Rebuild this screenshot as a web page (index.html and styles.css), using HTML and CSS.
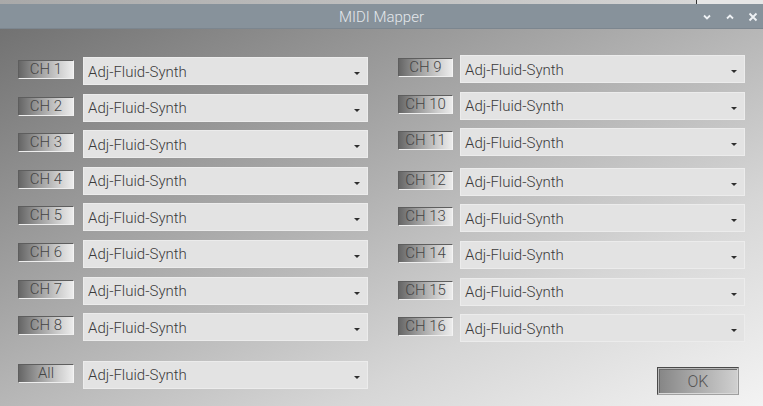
FILE: index.html
```html
<!DOCTYPE html>
<html>
<head>
<meta charset="utf-8">
<link rel="stylesheet" href="styles.css">
</head>
<body>
<div class="topstrip"><div class="strip-right"></div></div>
<div class="titlebar">
  <span class="title">MIDI Mapper</span>
  <div class="winbtns">
    <svg width="10" height="8" viewBox="0 0 10 8"><path d="M2 2.5 L5 5.5 L8 2.5" fill="none" stroke="#eef1f4" stroke-width="1.8"/></svg>
    <svg width="10" height="8" viewBox="0 0 10 8"><path d="M2 5.5 L5 2.5 L8 5.5" fill="none" stroke="#eef1f4" stroke-width="1.8"/></svg>
    <svg width="10" height="10" viewBox="0 0 10 10"><path d="M1.5 1.5 L8.5 8.5 M8.5 1.5 L1.5 8.5" fill="none" stroke="#eef1f4" stroke-width="1.9"/></svg>
  </div>
</div>
<div class="content">
  <div class="col left">
    <div class="row"><span class="lbl">CH 1</span><div class="sel"><span>Adj-Fluid-Synth</span><i class="arr"></i></div></div>
    <div class="row"><span class="lbl">CH 2</span><div class="sel"><span>Adj-Fluid-Synth</span><i class="arr"></i></div></div>
    <div class="row"><span class="lbl">CH 3</span><div class="sel"><span>Adj-Fluid-Synth</span><i class="arr"></i></div></div>
    <div class="row"><span class="lbl">CH 4</span><div class="sel"><span>Adj-Fluid-Synth</span><i class="arr"></i></div></div>
    <div class="row"><span class="lbl">CH 5</span><div class="sel"><span>Adj-Fluid-Synth</span><i class="arr"></i></div></div>
    <div class="row"><span class="lbl">CH 6</span><div class="sel"><span>Adj-Fluid-Synth</span><i class="arr"></i></div></div>
    <div class="row"><span class="lbl">CH 7</span><div class="sel"><span>Adj-Fluid-Synth</span><i class="arr"></i></div></div>
    <div class="row"><span class="lbl">CH 8</span><div class="sel"><span>Adj-Fluid-Synth</span><i class="arr"></i></div></div>
    <div class="row all"><span class="lbl">All</span><div class="sel"><span>Adj-Fluid-Synth</span><i class="arr"></i></div></div>
  </div>
  <div class="col right">
    <div class="row"><span class="lbl">CH 9</span><div class="sel"><span>Adj-Fluid-Synth</span><i class="arr"></i></div></div>
    <div class="row"><span class="lbl">CH 10</span><div class="sel"><span>Adj-Fluid-Synth</span><i class="arr"></i></div></div>
    <div class="row"><span class="lbl">CH 11</span><div class="sel"><span>Adj-Fluid-Synth</span><i class="arr"></i></div></div>
    <div class="row r12"><span class="lbl">CH 12</span><div class="sel"><span>Adj-Fluid-Synth</span><i class="arr"></i></div></div>
    <div class="row"><span class="lbl">CH 13</span><div class="sel"><span>Adj-Fluid-Synth</span><i class="arr"></i></div></div>
    <div class="row"><span class="lbl">CH 14</span><div class="sel"><span>Adj-Fluid-Synth</span><i class="arr"></i></div></div>
    <div class="row"><span class="lbl">CH 15</span><div class="sel"><span>Adj-Fluid-Synth</span><i class="arr"></i></div></div>
    <div class="row"><span class="lbl">CH 16</span><div class="sel"><span>Adj-Fluid-Synth</span><i class="arr"></i></div></div>
    <div class="okrow"><button class="ok">OK</button></div>
  </div>
</div>
</body>
</html>
```

FILE: styles.css
```css
html, body {
  margin: 0;
  padding: 0;
  width: 763px;
  height: 406px;
  overflow: hidden;
  font-family: Roboto, "Liberation Sans", sans-serif;
}
.topstrip {
  height: 4px;
  background: linear-gradient(to right, #a9a9a9, #c4c4c4 60%, #dcdcdc);
  display: flex;
  justify-content: flex-end;
}
.strip-right {
  width: 66px;
  border-left: 1px solid #333;
  background: #e6e6e6;
}
.titlebar {
  height: 25px;
  background: #87929b;
  display: flex;
  align-items: center;
  justify-content: center;
  position: relative;
  box-shadow: inset 0 -1px 0 #7c868f;
}
.title {
  color: #e4e8ec;
  font-size: 15px;
  font-weight: 300;
}
.winbtns {
  position: absolute;
  right: 5px;
  top: 8px;
  display: flex;
  gap: 13px;
  align-items: center;
}
.content {
  height: 377px;
  background: linear-gradient(to bottom right, #727272 0%, #a9a9a9 40%, #d6d6d6 72%, #f3f3f3 100%);
  display: flex;
  padding-left: 18px;
  gap: 30px;
  box-sizing: border-box;
}
.col {
  display: flex;
  flex-direction: column;
}
.left {
  width: 350px;
  padding-top: 28px;
  gap: 8.6px;
}
.right {
  width: 347px;
  padding-top: 26px;
  gap: 8.6px;
}
.row {
  display: flex;
  align-items: center;
  height: 28px;
}
.left .row { gap: 9px; }
.right .row { gap: 7px; }
.row.all { margin-top: 11px; }
.row.r12 { margin-top: 3px; }
.lbl {
  width: 56px;
  height: 19px;
  box-sizing: border-box;
  margin-top: -3px;
  background: linear-gradient(to right, #666 0%, #9a9a9a 35%, #d0d0d0 75%, #ececec 100%);
  border-top: 1px solid #5e5e5e;
  border-left: 1px solid #5e5e5e;
  border-bottom: 1px solid #eeeeee;
  border-right: 1px solid #f4f4f4;
  color: #454545;
  font-size: 15px;
  font-weight: 300;
  line-height: 16px;
  text-align: center;
  flex: none;
}
.right .lbl { width: 55px; }
.sel {
  flex: 1;
  height: 28px;
  box-sizing: border-box;
  background: #e3e3e3;
  border: 1px solid #ececec;
  display: flex;
  align-items: center;
  justify-content: space-between;
  padding: 0 7px 0 4px;
  color: #3a3a3a;
  font-size: 15px;
  font-weight: 300;
}
.sel span { margin-top: 1px; }
.arr {
  width: 0;
  height: 0;
  border-left: 3px solid transparent;
  border-right: 3px solid transparent;
  border-top: 3px solid #2e2e2e;
  margin-top: 5px;
}
.okrow {
  display: flex;
  justify-content: flex-end;
  padding-right: 6px;
  margin-top: 16px;
}
.ok {
  width: 82px;
  height: 28px;
  box-sizing: border-box;
  border: 1px solid #4a4a4a;
  border-right-color: #9a9a9a;
  border-bottom-color: #a0a0a0;
  box-shadow: inset 1px 1px 0 #b8b8b8, inset -1px -1px 0 #d8d8d8, inset 2px 2px 0 #6a6a6a;
  background: linear-gradient(to right, #858585 0%, #a8a8a8 45%, #d0d0d0 100%);
  color: #555;
  font-family: Roboto, "Liberation Sans", sans-serif;
  font-size: 16px;
  font-weight: 300;
  padding: 2px 0 0 0;
}
```
